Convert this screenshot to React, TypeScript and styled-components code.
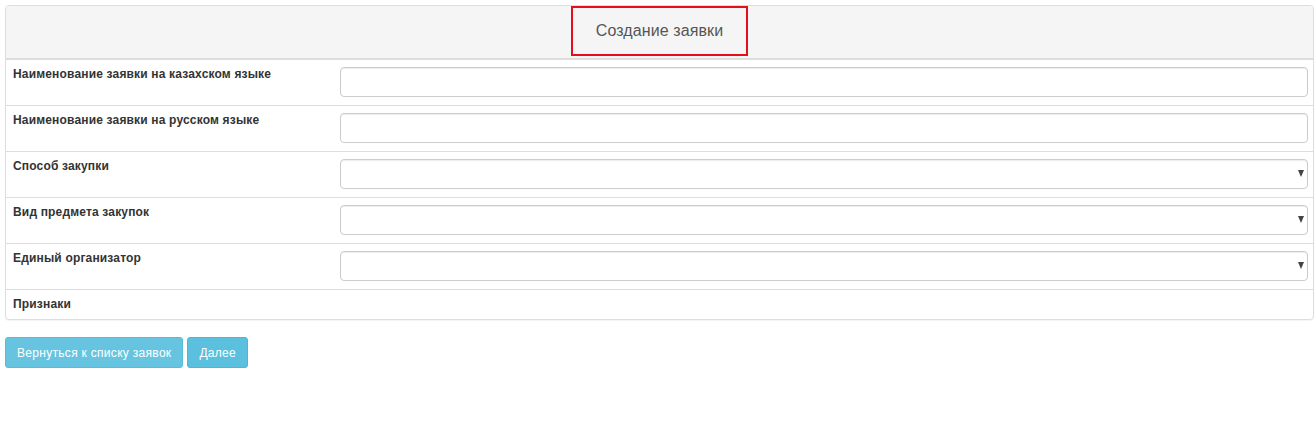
import React from "react";
import styled, { createGlobalStyle } from "styled-components";

const GlobalStyle = createGlobalStyle`
  body {
    margin: 0;
    background: #fff;
    font-family: "Liberation Sans", Arial, sans-serif;
    font-size: 12px;
    color: #333;
  }
`;

const Page = styled.div`
  padding: 5px 1px 0 5px;
`;

const Panel = styled.div`
  border: 1px solid #ddd;
  border-radius: 4px;
  box-shadow: 0 1px 1px rgba(0, 0, 0, 0.05);
  overflow: hidden;
`;

const Header = styled.div`
  display: flex;
  justify-content: center;
  background: #f5f5f5;
  border-bottom: 1px solid #ddd;
  height: 52px;
`;

const TitleBox = styled.div`
  display: flex;
  align-items: center;
  justify-content: center;
  width: 173px;
  height: 46px;
  border: 2px solid #e3101a;
  font-size: 16px;
  letter-spacing: 0.1px;
  color: #555;
`;

const Row = styled.div`
  display: grid;
  grid-template-columns: 334px 1fr;
  border-top: 1px solid #ddd;
  &:first-of-type {
    border-top: none;
  }
`;

const Label = styled.div`
  padding: 7px 7px;
  font-weight: bold;
  font-size: 12px;
  letter-spacing: 0.17px;
  line-height: 15px;
  color: #333;
`;

const Cell = styled.div`
  padding: 7px 5px 8px 0;
`;

const TextInput = styled.input`
  display: block;
  box-sizing: border-box;
  width: 100%;
  height: 30px;
  border: 1px solid #ccc;
  border-radius: 4px;
  box-shadow: inset 0 1px 1px rgba(0, 0, 0, 0.075);
  padding: 4px 8px;
  font-family: inherit;
`;

const SelectBox = styled.div`
  position: relative;
  box-sizing: border-box;
  height: 30px;
  border: 1px solid #ccc;
  border-radius: 4px;
  box-shadow: inset 0 1px 1px rgba(0, 0, 0, 0.075);
  background: #fff;
`;

const Caret = styled.span`
  position: absolute;
  right: 3px;
  top: 10px;
  width: 0;
  height: 0;
  border-left: 3.5px solid transparent;
  border-right: 3.5px solid transparent;
  border-top: 7px solid #444;
`;

const Actions = styled.div`
  display: flex;
  gap: 4px;
  margin-top: 17px;
`;

const Button = styled.button<{ $faded?: boolean }>`
  height: 31px;
  padding: 0 11px;
  border: 1px solid #46b8da;
  border-radius: 3px;
  background: #5bc0de;
  color: #fff;
  font-family: inherit;
  font-size: 12px;
  letter-spacing: 0.3px;
  opacity: ${(p) => (p.$faded ? 0.92 : 1)};
`;

const fields = [
  { label: "Наименование заявки на казахском языке", kind: "text" },
  { label: "Наименование заявки на русском языке", kind: "text" },
  { label: "Способ закупки", kind: "select" },
  { label: "Вид предмета закупок", kind: "select" },
  { label: "Единый организатор", kind: "select" },
];

const App = () => {
  return (
    <Page>
      <GlobalStyle />
      <Panel>
        <Header>
          <TitleBox>Создание заявки</TitleBox>
        </Header>
        {fields.map((f) => (
          <Row key={f.label}>
            <Label>{f.label}</Label>
            <Cell>
              {f.kind === "text" ? (
                <TextInput type="text" />
              ) : (
                <SelectBox>
                  <Caret />
                </SelectBox>
              )}
            </Cell>
          </Row>
        ))}
        <Row>
          <Label>Признаки</Label>
          <div />
        </Row>
      </Panel>
      <Actions>
        <Button $faded>Вернуться к списку заявок</Button>
        <Button>Далее</Button>
      </Actions>
    </Page>
  );
};

export default App;
